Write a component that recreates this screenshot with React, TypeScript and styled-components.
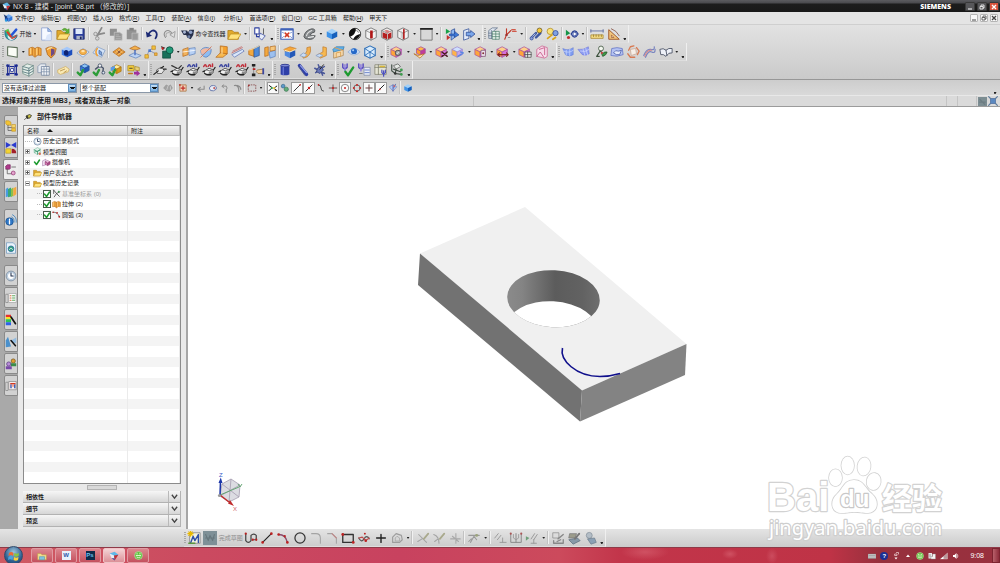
import React from "react";
import styled, { createGlobalStyle, css } from "styled-components";

const Global = createGlobalStyle`
  * { box-sizing: border-box; }
  html, body { margin: 0; padding: 0; }
  body {
    font-family: "Liberation Sans", "Noto Sans CJK SC", sans-serif;
    font-size: 6px;
    line-height: 10px;
    color: #1c1c1c;
    background: #d4d4d4;
  }
  button, select { font: inherit; color: inherit; }
`;

/* ---------- drawing helpers ---------- */

const line = (d: string, stroke: string, width = 1.2) => (
  <path d={d} fill="none" stroke={stroke} strokeWidth={width} strokeLinecap="round" strokeLinejoin="round" />
);
const area = (d: string, fill: string, stroke = "none", width = 0.8) => (
  <path d={d} fill={fill} stroke={stroke} strokeWidth={width} strokeLinejoin="round" />
);
const dot = (x: number, y: number, r: number, fill: string, stroke = "none") => (
  <circle cx={x} cy={y} r={r} fill={fill} stroke={stroke} strokeWidth={0.9} />
);
const cube = (top: string, left: string, right: string, edge = "none", x = 8, y = 8, s = 6) => (
  <>
    {area(`M${x} ${y - s}L${x + s} ${y - s / 2}L${x} ${y}L${x - s} ${y - s / 2}Z`, top, edge)}
    {area(`M${x - s} ${y - s / 2}L${x} ${y}V${y + s}L${x - s} ${y + s / 2}Z`, left, edge)}
    {area(`M${x + s} ${y - s / 2}L${x} ${y}V${y + s}L${x + s} ${y + s / 2}Z`, right, edge)}
  </>
);
const folder = (
  <>
    {area("M1 4H6L8 6H13V14H1Z", "#e0a92c", "#a87410")}
    {area("M4 8H16L12 14H1Z", "#ffe27c", "#b98a1c")}
  </>
);
const pinkCube = cube("#ffd08a", "#ffa63a", "#d66fdc", "#a8509c", 7, 8, 6);
const wireBox = (
  <>
    {area("M8 1L14 4V12L8 15L2 12V4Z", "#f2f2f2", "#555")}
    {line("M2 4L8 7L14 4M8 7V15", "#777", 0.8)}
  </>
);
const teapot = (
  <>
    {area("M3 9L8 6L13 8Q14 11 10 14L6 14Q2 13 3 9Z", "#f2f2f2", "#444", 0.9)}
    {area("M8 10L13 9Q13 12 10 14H7Z", "#8c8c8c")}
    {line("M13 8L15 5M3 9L1 10M3 12Q6 14 10 13", "#222", 1.3)}
    {line("M5 8Q8 10 12 8", "#555", 0.9)}
  </>
);
const flags = (
  <>
    {line("M2 1V5Q4 8 7 5V1", "#5a4fc0", 1.7)}
    {line("M4.5 2V9", "#8c7be0", 1.6)}
  </>
);
const greenCheck = line("M2 11L5 14L8 8", "#2c9c38", 2.8);
const pencil = (color: string) => line("M14 3L9 9", color, 2);

const drawings: Record<string, React.ReactNode> = {
  nx: (
    <>
      {area("M1 4L9 1L15 6L9 12Z", "#5db7e8")}
      {area("M1 4L8 7L9 12L4 11Z", "#e9eef4")}
      {area("M8 7L15 6L9 15Z", "#c02f35")}
      {area("M4 11L9 12V15Z", "#2e4aa8")}
    </>
  ),
  part: (
    <>
      {cube("#6fa8ee", "#1f55b8", "#2f78dc", "none", 9, 8, 6)}
      {area("M1 2L7 6L4 9Z", "#15356f")}
      {dot(5, 12, 2, "#2d9be0")}
    </>
  ),
  start: (
    <>
      {area("M1 4Q0 15 9 15Q15 14 15 9L10 11L5 7Z", "#2fa3a0", "#1c5f80")}
      {area("M1 4L5 2L8 9L7 12Z", "#5cc24a")}
      {area("M4 9L9 13L14 10Q12 15 8 15Q4 14 4 9Z", "#dcebf2")}
      {line("M8 10L14 3", "#2456d8", 2.8)}
      {line("M4 6L8 11", "#e0382c", 2.2)}
      {line("M9 13Q13 12 14 10", "#e0382c", 1.3)}
    </>
  ),
  page: (
    <>
      {area("M3 1H10L14 5V15H3Z", "#f6f9ff", "#7f97cc")}
      {area("M10 1L14 5H10Z", "#a9c2ee", "#6f8cc4")}
      {area("M9 9L14 7V15H7Z", "#dbe6fa")}
    </>
  ),
  open: (
    <>
      {folder}
      {area("M7 3Q10 0 13 3L15 2V7H10L12 5Q10 3 8 4Z", "#63b53a", "#3c8420", 0.5)}
    </>
  ),
  folder,
  save: (
    <>
      {area("M2 2H14V14H3L2 13Z", "#2c3f9e", "#17225e")}
      {area("M4 2H12V8H4Z", "#dfe9fa")}
      {area("M5 10H12V14H5Z", "#aeb6c8")}
      {area("M9 11H11V14H9Z", "#1b2560")}
    </>
  ),
  cut: (
    <>
      {line("M6 10L11 1", "#8a8a8a", 2)}
      {line("M5 9L14 7", "#8a8a8a", 2)}
      {dot(4, 8, 2, "#d8d8d8", "#8a8a8a")}
      {dot(6, 13, 2, "#d8d8d8", "#8a8a8a")}
    </>
  ),
  copy: (
    <>
      {area("M1 2H9V10H1Z", "#8f8f8f")}
      {area("M6 6H12L15 8V15H6Z", "#969696", "#c4c4c4")}
      {line("M8 9H11M8 11H13M8 13H13", "#bcbcbc", 0.8)}
    </>
  ),
  paste: (
    <>
      {area("M2 3H13V14H2Z", "#929292")}
      {area("M5 1H10V4H5Z", "#828282")}
      {area("M8 7H15V15H8Z", "#9b9b9b", "#c0c0c0")}
    </>
  ),
  undo: (
    <>
      {line("M4 8Q8 2 12 5Q15 8 12 13", "#1c2a74", 2)}
      {area("M1 5L2 12L8 10Z", "#1c2a74")}
    </>
  ),
  redo: (
    <>
      {line("M12 8Q8 2 4 5Q1 8 4 12", "#8e8e8e", 1.2)}
      {line("M11 8Q8 5 5 7Q4 9 5 11", "#9a9a9a", 0.9)}
      {area("M15 5L14 12L9 9Z", "#dedede", "#8e8e8e")}
    </>
  ),
  finder: (
    <>
      {area("M0 4H7L8 6L10 3H15L14 9L11 14L7 12L6 9L3 9Z", "#27304c")}
      {dot(4, 6, 1.6, "#a8b6d2")}
      {dot(11, 6, 2, "#8fa1c8")}
      {dot(9, 11, 1.7, "#6f81a8")}
    </>
  ),
  styles: (
    <>
      {area("M2 1H7V8H2Z", "#fff", "#2c3f9e", 1.2)}
      {line("M4 8V11H8", "#2c3f9e", 1.2)}
      {area("M8 7L14 10L10 15L7 12Z", "#e6ecf8", "#2c3f9e")}
      {line("M12 2V8", "#555", 1)}
    </>
  ),
  fit: (
    <>
      {area("M1 2H15V14H1Z", "#fff", "#3f62b8", 1.4)}
      {area("M1 2H15V4H1Z", "#3f62b8")}
      {line("M6 7L10 11M10 7L6 11", "#d33a22", 1.8)}
      {line("M3 6L4 7M13 6L12 7M3 12L4 11M13 12L12 11", "#3f62b8", 1)}
    </>
  ),
  shade: (
    <>
      {area("M1 11Q2 4 10 2Q15 2 13 6Q10 6 8 9Q11 10 14 10Q12 15 6 14Q2 14 1 11Z", "#85898b", "#3d4042")}
      {line("M4 10Q5 6 10 4", "#dedede", 1.2)}
      {line("M6 12L12 11", "#f2f2f2", 1.2)}
    </>
  ),
  blueCube: cube("#9fd0fa", "#3f93e8", "#1560bd"),
  bw: (
    <>
      {dot(8, 8, 6.5, "#fff", "#111")}
      {area("M8 1.5A6.5 6.5 0 0 0 2 11Q7 10 8 6Q10 3 8 1.5Z", "#111")}
      {area("M6 14Q8 9 14 8A6.5 6.5 0 0 1 6 14Z", "#111")}
      {line("M10 4L12 6", "#888", 1.2)}
    </>
  ),
  boxA: <>{wireBox}{area("M7 4H10V13H7Z", "#b01616")}</>,
  boxB: <>{wireBox}{area("M3 6L8 8V14L3 12ZM9 8L13 6V12L9 14Z", "#b52020")}{area("M5 4L8 3L12 5L8 7Z", "#d98080")}</>,
  boxC: <>{wireBox}{line("M9 3V13", "#b01616", 1.8)}{line("M6 5V12", "#bdbdbd", 1)}</>,
  square: (
    <>
      {area("M2 2H15V15H2Z", "#d8d8d8", "#555")}
      {line("M2 2H15", "#222", 2)}
    </>
  ),
  clipA: (
    <>
      {area("M1 2L6 5L1 8Z", "#18a04a")}
      {area("M2 9L6 12L2 15Z", "#c22f2f")}
      {area("M7 4L11 2V12L7 15Z", "#8fb9f2", "#22428e")}
      {area("M5 8H11V5L16 9L11 12V10H5Z", "#3c78d8", "#173a8c", 0.6)}
    </>
  ),
  clipB: (
    <>
      {area("M3 4L9 2V13L3 15Z", "#e2ebfa", "#22428e")}
      {area("M6 6H11V4L16 8L11 12V10H6Z", "#7aa6ea", "#22428e")}
    </>
  ),
  layers: (
    <>
      {area("M2 4L6 1H12L8 4V13H2Z", "#dfe6ef", "#5a6c86")}
      {line("M2 7H8M2 10H8M5 4V13", "#5a6c86", 0.8)}
      {area("M6 5H14V14H6Z", "#e5f2ea", "#4a7d6c")}
      {line("M6 8H14M6 11H14M10 5V14", "#4a7d6c", 0.8)}
    </>
  ),
  csys: (
    <>
      {line("M4 2V9L2 14M4 9L9 4", "#c0392b", 1.3)}
      {line("M10 3H14M11 5H15", "#d05a4a", 1.4)}
      {dot(4, 9, 1.4, "#9b2f2f")}
      {line("M6 12H8", "#888", 1)}
    </>
  ),
  lightA: (
    <>
      {line("M3 12L8 7M8 12L13 7", "#3c569f", 2.8)}
      {line("M4 11L7 8", "#c6d4f4", 1)}
      {dot(12, 4, 2.8, "#f6c93a", "#6a5a2d")}
      {dot(3, 13, 1.8, "#8ea2dc", "#344d98")}
    </>
  ),
  lightB: (
    <>
      {dot(6, 5, 3.6, "#f9e27a", "#b08f2d")}
      {dot(12, 7, 3, "#7fa0e2", "#344d98")}
      {line("M3 13L8 9M9 14L12 12", "#d8a41a", 2)}
    </>
  ),
  play: (
    <>
      {area("M1 3L6 7L1 10Z", "#159447")}
      {dot(4, 12, 1.8, "#c02f2f")}
      {area("M7 8Q11 1 15 8Q11 15 7 8Z", "#c7d9f6", "#2a3f92", 1.4)}
      {dot(11, 8, 2, "#fff", "#2a3f92")}
    </>
  ),
  ruler: (
    <>
      {area("M1 9H15V13H1Z", "#f3db86", "#a58226")}
      {line("M1 3V6M15 3V6M1 4.5H15", "#5b6b9f", 1)}
      {line("M4 9V11M7 9V11M10 9V11M13 9V11", "#8b6d1d", 0.7)}
    </>
  ),
  angle: (
    <>
      {area("M2 3L14 14H2Z", "#f3c77d", "#a0572a", 1.1)}
      {area("M5 9L8 12H5Z", "#e4e4e4", "#a0572a")}
      {line("M5 2Q11 4 14 10", "#8a5c4f", 1)}
    </>
  ),
  plane: area("M3 2L14 3V14L3 12Z", "#fafcf6", "#5c6e58", 1.2),
  extrude: (
    <>
      {area("M1 4Q5 1 8 4Q11 1 15 4V12Q11 10 8 14Q5 10 1 12Z", "#f3a93e", "#b3671a")}
      {line("M8 4V13M5 4V11M12 4V11", "#c4782a", 1)}
      {line("M3 4V10M10 4V11", "#ffdc98", 1)}
    </>
  ),
  revolve: (
    <>
      {area("M2 4Q8 0 14 4L12 11L8 15L4 11Z", "#f0a034", "#a85d18")}
      {area("M8 4L12 5V10L8 13Z", "#6c4a86")}
      {line("M4 5Q6 3 9 3", "#fbe0a2", 1.4)}
    </>
  ),
  hole: <>{cube("#a5c8fa", "#3c7be8", "#1d4fbf")}<ellipse cx="7" cy="9" rx="2.6" ry="3.2" fill="#0f2474" /></>,
  boss: (
    <>
      {area("M1 9L8 4L15 8L8 14Z", "#dbe8f9", "#7f9ac2")}
      <ellipse cx="8" cy="8" rx="4" ry="3" fill="#f6b34a" stroke="#d0903c" />
      <ellipse cx="8" cy="7" rx="2" ry="1.2" fill="#ffe2ac" />
    </>
  ),
  pocket: (
    <>
      {area("M1 9L6 2L15 6L11 14Z", "#d3e3f8", "#7f9ac2")}
      {line("M6 4Q3 8 6 12", "#f0a034", 1.8)}
      {area("M8 6L11 8V12L8 10Z", "#7ea2d8", "#46669c")}
    </>
  ),
  emboss: (
    <>
      {area("M1 8L8 3L15 8L8 13Z", "#f1a33c", "#b0661b")}
      {line("M4 8L8 11M6 6L11 10M9 5L13 8", "#a86a2a", 0.9)}
      {line("M4 9L9 5M7 11L12 7", "#ffd68c", 0.9)}
      {dot(8, 8, 1.5, "#8f5a3c")}
    </>
  ),
  offset: (
    <>
      {area("M1 12L7 9L15 12L9 15Z", "#bcd3f3", "#5b7fb8")}
      {area("M2 4L8 1L14 4L8 6Z", "#f4b04a", "#b0661b")}
      {line("M8 6V11", "#4a6fc0", 1.6)}
    </>
  ),
  pattern: (
    <>
      {line("M3 13L6 6L12 3M6 6L13 10", "#8a94b0", 1.1)}
      {area("M1 11H5V15H1Z", "#f1c33c", "#c0882a")}
      {area("M9 1H13V5H9Z", "#f1c33c", "#c0882a")}
      {area("M5 5H8V8H5Z", "#4a78d0")}
      {area("M12 9H15V12H12Z", "#f1b03c", "#c0882a")}
    </>
  ),
  unite: (
    <>
      {area("M3 7H12V15H3Z", "#17705a", "#0b4638")}
      {dot(11, 6, 4, "#1f9a78", "#0b4638")}
      {area("M1 1L6 3L3 6Z", "#333")}
      {dot(3, 4, 1.3, "#c22")}
    </>
  ),
  trim: (
    <>
      {area("M1 5L7 3V11L1 13Z", "#f3b45e", "#b3671a")}
      {area("M8 4L15 3V10L8 12Z", "#b7d0f5", "#5b7fb8")}
      {line("M1 8L15 6", "#fff", 0.9)}
    </>
  ),
  split: (
    <>
      {area("M2 6Q7 0 14 5Q14 12 8 14Q2 13 2 6Z", "#8fbcf1", "#4a78bd")}
      {area("M2 6Q7 2 14 5Q8 7 3 11Z", "#f2b8a0")}
      {line("M2 14L14 2", "#d0785a", 1)}
    </>
  ),
  rib: (
    <>
      {area("M6 1L14 2V10L6 12Z", "#f4a12e", "#b3671a")}
      {area("M6 9L14 10L9 14L1 14Z", "#f7b84e", "#b3671a")}
      {line("M8 3V10", "#fbe0a2", 1.2)}
    </>
  ),
  sheet: (
    <>
      {area("M1 11L13 5L15 7L4 14Z", "#d9e7fa", "#5b6fb0")}
      {line("M2 7L12 2M1 9L13 3", "#c46a6a", 0.9)}
    </>
  ),
  draft: (
    <>
      {area("M2 6L8 4V13L2 11Z", "#f3a93e", "#b3671a")}
      {area("M8 4L14 1V12L8 14Z", "#4f8ad8", "#2c5294")}
      {line("M2 6L8 4L14 1", "#ffe4b0", 1)}
    </>
  ),
  shell: (
    <>
      {area("M2 3L6 2V12L2 13Z", "#f3a93e", "#b3671a")}
      {area("M7 8L14 6V13L8 15Z", "#9cc0f0", "#5b7fb8")}
      {area("M8 2L14 1V6L8 7Z", "#f6c77d", "#b3671a")}
    </>
  ),
  thread: (
    <>
      {area("M1 5L8 2L15 4L13 6L3 8Z", "#f6a63a", "#b3671a", 0.6)}
      {area("M2 7L8 8V15L2 12Z", "#4f8ae0")}
      {area("M8 8L14 6V12L8 15Z", "#2358b8")}
      {line("M2 6L8 8L14 5", "#fff1c8", 1)}
    </>
  ),
  blend: (
    <>
      {area("M3 11Q10 11 9 3L13 2Q15 13 5 15Z", "#f3b04e", "#c07a2a")}
      {area("M1 12L5 9L9 11L6 14Z", "#c7dcf7", "#7f9ac2")}
    </>
  ),
  chamfer: (
    <>
      {area("M3 11L9 8V2L13 3V12L6 15Z", "#f7b84f", "#c07a2a")}
      {area("M1 12L5 14L9 12L5 10Z", "#c7dcf7", "#7f9ac2")}
    </>
  ),
  scale: (
    <>
      {area("M3 7L14 4V12L3 15Z", "#f7d9ac", "#a37f4e")}
      {area("M2 5L6 2H15L14 5L3 8Z", "#5fb0ea", "#3b7fb2")}
      {line("M4 3L13 6", "#e8a050", 1.2)}
      {line("M6 14V9L11 8V13", "#d8a050", 1)}
    </>
  ),
  sphere: (
    <>
      {area("M1 8Q8 0 15 8Q8 15 1 8Z", "#c8dcf5", "#8fa9d0")}
      {dot(8, 7, 3.4, "#2468c8")}
      {dot(7, 6, 1.2, "#a8ccf6")}
    </>
  ),
  net: (
    <>
      {area("M8 1L14 4V12L8 15L2 12V4Z", "#d8ebfb", "#2e6fb8", 1.2)}
      {line("M2 4L8 8L14 4M8 8V15M2 12L8 8L14 12", "#2e6fb8", 1)}
    </>
  ),
  syncMove: <>{pinkCube}{dot(9, 9, 3, "#a8a8a8", "#444")}{line("M8 10L10 8", "#f2f2f2", 1)}</>,
  syncPull: <>{cube("#ffb84a", "#ff9d2e", "#c23a9a", "#a0459c", 9, 7, 5)}{area("M1 10L6 12L13 10L8 15Z", "#ffe4b0", "#b3671a")}</>,
  syncDelete: <>{pinkCube}{line("M8 8L14 13M14 8L8 13", "#4a2020", 1.6)}</>,
  syncReplace: <>{cube("#cfe0ff", "#ffb347", "#c6a4e8", "#9a87d0", 7, 8, 6)}{line("M8 13L14 9L11 8", "#5a86e2", 1.6)}</>,
  syncResize: <>{pinkCube}{area("M8 6H13V13H8Z", "#efe4ef", "#75506a")}{dot(10.5, 9.5, 1.1, "#803030")}</>,
  syncDim: <>{pinkCube}{line("M2 11H14M4 9L2 11L4 13M12 9L14 11L12 13", "#802222", 1.2)}</>,
  syncEdit: <>{pinkCube}{area("M8 8H15V14H8Z", "#eee", "#444")}{line("M8 11H15M11 8V14", "#444", 0.9)}</>,
  syncShell: (
    <>
      {area("M2 5L8 1L14 3V13L11 15L2 13Z", "#f6dcea", "#c85a8a")}
      {line("M5 5L11 3V11M2 13L6 8L10 14", "#c85a8a", 1)}
    </>
  ),
  surfA: (
    <>
      {area("M2 4Q8 7 14 3V11Q10 14 5 11Z", "#7f9cf0", "#5870d0", 0.5)}
      {line("M6 6V11M10 5V12M3 7Q9 10 14 6", "#c4d2fc", 0.9)}
    </>
  ),
  surfB: (
    <>
      {area("M1 5Q7 6 13 2L14 10Q10 13 6 11Z", "#8c9cf2", "#6068d4", 0.5)}
      {line("M4 7Q9 9 14 5M7 5L9 12M10 4L12 11", "#ccd4fd", 0.9)}
    </>
  ),
  sweep: (
    <>
      {dot(8, 4, 2.8, "#f2f6ee", "#3a4f3a")}
      {line("M7 7L3 13M3 13L6 13M8 7L9 10", "#3a4f3a", 1.2)}
      {area("M9 11Q11 7 15 8Q14 12 10 13Z", "#3f9a48", "#274f2a")}
      {dot(9, 9, 1.3, "#c04040")}
    </>
  ),
  mesh: (
    <>
      {area("M2 4Q8 2 14 4L15 11Q8 14 1 12Z", "#b4c2f2", "#5a6cc2")}
      {area("M4 9Q6 5 10 7L13 6L11 11Q7 12 4 9Z", "#e6ebfb", "#3a4fa2")}
    </>
  ),
  nSided: (
    <>
      {area("M5 5L11 4L12 10L6 12Z", "#f6efe8", "#c8a08a")}
      {line("M3 6L5 2L9 1M12 3L15 7L13 11M10 14L5 14L2 10", "#d87a52", 1.5)}
    </>
  ),
  ribbon: (
    <>
      {line("M2 12Q5 4 10 5T14 2", "#7a86c0", 1.4)}
      {line("M4 14Q7 6 11 8T15 5", "#7a86c0", 1.4)}
      {line("M3 13Q6 5 11 6", "#d98a8a", 1.2)}
    </>
  ),
  book: (
    <>
      {area("M1 5Q5 3 8 6Q11 3 15 4V9Q11 8 8 13Q5 10 2 11Z", "#eef1f8", "#4a5266", 1)}
      {line("M8 6L9 12", "#4a5266", 1)}
    </>
  ),
  frame: (
    <>
      {line("M3 4H13V12H3Z", "#1c2a8e", 1.3)}
      {line("M5 2V14M11 2V14M5 10L11 5", "#4a58b8", 1)}
      {dot(8, 8, 2, "#f2f4ff", "#1c2a8e")}
      {dot(3, 3, 1.7, "#1c2a8e")}{dot(13, 3, 1.7, "#1c2a8e")}{dot(3, 13, 1.7, "#1c2a8e")}{dot(13, 13, 1.7, "#1c2a8e")}
    </>
  ),
  stackA: (
    <>
      {area("M2 4L7 1L14 3V12L9 15L2 12Z", "#e4eee8", "#6a8a80")}
      {line("M2 4L9 6L14 3M2 7L9 9L14 6M2 10L9 12L14 9M9 6V15", "#5a7a80", 1)}
    </>
  ),
  stackB: (
    <>
      {area("M1 4L4 1H10V11H1Z", "#e6eaf0", "#7a8ca6")}
      {area("M5 4H14V14H5Z", "#f2f4f7", "#6a7c98")}
      {line("M5 7H14M5 10H14M8 4V14M11 4V14", "#7a8ca6", 0.8)}
    </>
  ),
  tag: (
    <>
      {area("M2 8L11 4L15 7L14 10L5 13L2 11Z", "#f9e9b4", "#d0ac5a")}
      {line("M5 9L10 7M9 11L12 9", "#b8924a", 1)}
    </>
  ),
  asmAdd: <>{cube("#8cc4f6", "#3a7ad8", "#2259b4", "#1f4f9c", 10, 6, 5)}{greenCheck}</>,
  asmMove: (
    <>
      {line("M4 7L9 3L13 6L12 12", "#4a5468", 1.6)}
      {dot(9, 3, 2, "#f2f2f2", "#37455f")}
      {dot(13, 11, 1.6, "#dfe5f0", "#37455f")}
      {greenCheck}
    </>
  ),
  asmMate: <>{cube("#ffec9c", "#f6c52f", "#d99a18", "#a87410", 10, 7, 5)}{area("M3 5L8 3V8L3 9Z", "#5a9ae6")}{greenCheck}</>,
  asmSeq: (
    <>
      {area("M1 3H8V9H1Z", "#f6cf3d", "#a8861c")}
      {area("M9 4L14 5V9L9 8Z", "#e8d07a", "#a8861c")}
      {line("M2 12H6", "#c27a1c", 1.8)}
      {area("M8 10H11V8L15 12L11 15V13H8Z", "#a0309c")}
      {line("M3 6H6", "#333", 1)}
    </>
  ),
  teapotA: (
    <>
      {area("M4 8L9 5L13 8L10 12L5 12Z", "#e6e6e6", "#444")}
      {line("M1 13L6 9M12 7L15 7M9 6L12 4", "#222", 1.4)}
    </>
  ),
  teapotB: <>{teapot}{line("M2 3L8 6M13 3L10 6", "#333", 1.3)}</>,
  teapotC: <>{teapot}{line("M2 4Q4 0 5 4M7 4Q9 0 10 4M12 1V4", "#3b46a0", 1.7)}</>,
  teapotD: <>{teapot}{line("M2 4Q4 0 5 4M7 4Q9 0 10 4M12 1V4", "#c02f3a", 1.7)}</>,
  treeHand: (
    <>
      {line("M3 2V14", "#888", 1)}
      {area("M1 1H5V4H1ZM1 12H5V15H1Z", "#222")}
      {area("M2 6H5V8H2Z", "#b22")}
      {area("M7 8L14 7V12H8L6 10Z", "#f3cf9a", "#8a6a3a")}
      {area("M13 6H15V13H13Z", "#3b46a0")}
    </>
  ),
  cylinder: (
    <>
      {area("M3 3V13Q8 15 13 13V3Z", "#2e3fa8")}
      <ellipse cx="8" cy="3" rx="5" ry="1.5" fill="#7c88d8" stroke="#2a368c" />
      {line("M6 5V13", "#6c7ad8", 1.4)}
    </>
  ),
  pin: <>{line("M4 3L12 13", "#2e3fa8", 4)}{line("M5 3L12 11", "#9aa6ea", 1.2)}{line("M3 4L10 14", "#555f90", 1)}</>,
  screw: <>{line("M2 6L13 12M3 11L13 4M6 2L11 14", "#4b589a", 1.7)}{area("M5 6L9 4L12 8L8 12L4 10Z", "#6a78b8", "#29366e")}{line("M12 2L8 7", "#222", 1.1)}</>,
  checkA: <>{flags}{line("M5 10L8 14L14 5", "#1d9a30", 2.6)}</>,
  checkB: <>{flags}{area("M8 5H15V14H8Z", "#e8ecf6", "#7a86a6")}{line("M9 8H14M9 11H14", "#5f7ac8", 1)}{line("M3 12H6", "#777", 1)}</>,
  checkC: <>{area("M1 2H14V13H1Z", "#e4e4d4", "#7c7c6a")}{line("M1 5H14M5 2V13", "#7c7c6a", 0.9)}{line("M7 4H12", "#d8b83a", 1.6)}{line("M9 8V11L11 13L13 11V8M11 9V15", "#4b4fc0", 1.4)}</>,
  checkD: (
    <>
      {area("M4 3L9 1L12 4L7 7Z", "#e4e8e4", "#555")}
      {line("M2 2V9L6 12L13 13M4 7L12 10M7 7L6 12", "#3f4c43", 1.3)}
      {dot(13, 8, 1.6, "#3c9b4c")}{dot(13, 13, 1.5, "#3c9b4c")}{dot(6, 12, 1.5, "#333")}
    </>
  ),
  selGray: <>{area("M1 8L5 3L9 5L12 3L15 8L11 13L5 12Z", "#a2a2a2", "#8a8a8a")}{line("M8 5L6 11M12 6V10", "#cacaca", 1.4)}</>,
  selPlus: <>{area("M3 3H13V13H3Z", "#f4d4be", "#b07a4a", 1.4)}{line("M8 5V11M5 8H11", "#c0302a", 2)}{dot(3, 3, 1.5, "#c0302a")}</>,
  selBack: line("M13 5V10H4M7 7L3 10L7 13", "#8b8b8b", 1.7),
  selLasso: <>{area("M2 8Q4 3 9 4Q15 5 13 10Q9 14 4 12Z", "#e8ecf6", "#6f7faf", 1.6)}{dot(10, 8, 1.8, "#c06060")}</>,
  selRot: line("M4 5H10Q13 8 10 11M6 3L3 5L6 8M10 11V15", "#8b8b8b", 1.5),
  selHook: line("M4 4Q11 3 11 13M9 4Q14 6 14 10", "#8b8b8b", 2),
  marquee: <><rect x="2" y="3" width="12" height="10" fill="none" stroke="#8a5050" strokeWidth="1.4" strokeDasharray="2.5 1.5" />{dot(3, 4, 1.3, "#a02222")}</>,
  snapMix: <>{line("M2 4L6 7M2 12L5 9M10 8L14 5M10 9L14 12", "#222", 1.6)}{dot(6, 8, 1.8, "#2f9b48")}{dot(10, 8, 1.8, "#e0b92c")}{dot(13, 12, 1.3, "#222")}</>,
  snapMesh: <>{dot(5, 5, 3, "#5d9ac8", "#2f5f82")}{dot(10, 10, 3.4, "#62ad7a", "#2f6a44")}</>,
  snapEnd: <>{line("M3 13L13 3", "#222", 1.4)}{dot(13, 3, 1.3, "#c22")}</>,
  snapMid: <>{line("M3 13L13 3", "#222", 1.4)}{dot(8, 8, 1.9, "#c22")}</>,
  snapCtrl: <>{line("M4 3Q8 3 8 8Q8 13 12 13", "#444", 1.5)}{dot(4, 3, 1.3, "#c22")}</>,
  snapCross: <>{line("M2 8H14M8 3V14", "#5b4444", 1.4)}{dot(8, 8, 1.7, "#c22")}</>,
  snapArc: <>{dot(8, 8, 6, "none", "#333")}{dot(8, 8, 1.6, "#c22")}</>,
  snapQuad: <><circle cx="8" cy="8" r="5" fill="none" stroke="#555" strokeWidth="1.4" />{dot(8, 3, 1.6, "#c22")}{dot(8, 13, 1.6, "#c22")}{dot(3, 8, 1.6, "#c22")}{dot(13, 8, 1.6, "#c22")}</>,
  snapPoint: line("M8 3V13M3 8H13", "#6a4040", 1.6),
  snapCurve: <>{line("M3 13L13 3", "#222", 1.6)}{dot(6, 10, 1.4, "#c22")}</>,
  snapFace: <>{area("M2 6L8 3L14 6L8 13Z", "#b9cff4", "#4b67b8")}{line("M8 3V13M12 2L9 8", "#4f5fae", 1.4)}{dot(10, 5, 1.4, "#d06060")}</>,
  sketch: (
    <>
      {area("M3 2H15V14H3Z", "#f2f2e0", "#777")}
      {line("M4 14L7 6L9 11L13 4V13", "#2f4fa8", 1.6)}
      {line("M2 1L6 5M4 0V6M1 3H7M6 1L2 5", "#e8b800", 1.3)}
      {line("M2 14H9", "#5b9740", 1.6)}
    </>
  ),
  finish: <>{area("M0 0H16V16H0Z", "#7e9097")}{line("M3 4L6 11L8 5L11 11L13 4M3 8H13", "#66767c", 1.2)}</>,
  profile: <>{line("M2 3V11Q5 15 8 11V5Q11 2 14 5V10H10", "#444", 1.4)}{dot(2, 3, 1.3, "#b22")}{dot(10, 10, 1.3, "#b22")}{dot(14, 10, 1.3, "#b22")}</>,
  segment: <>{line("M3 13L13 3", "#222", 1.4)}{dot(3, 13, 1.5, "#b22")}{dot(13, 3, 1.5, "#b22")}</>,
  arc: <>{line("M3 4Q11 4 13 13", "#8a4a6a", 1.5)}{dot(3, 4, 1.5, "#b22")}{dot(13, 13, 1.5, "#b22")}{dot(10, 6, 1.3, "#b22")}</>,
  circle: <circle cx="8" cy="8" r="5.8" fill="none" stroke="#333" strokeWidth="1.4" />,
  fillet: line("M3 3H8Q13 3 13 8V14", "#a4a4a4", 1.2),
  bevel: <>{line("M3 3H8L13 8V14", "#a4a4a4", 1.2)}{line("M8 3L13 8", "#c08a8a", 1.3)}</>,
  rect: <>{line("M2 4H14V13H2Z", "#333", 1.5)}{dot(2, 4, 1.6, "#b22")}{dot(14, 13, 1.6, "#b22")}</>,
  spline: <>{line("M2 8Q5 14 8 9T14 9", "#555", 1.3)}{line("M2 8L6 7L10 11L14 8", "#c04a4a", 1.3)}{dot(9, 3, 1.1, "#b22")}{dot(10, 11, 1.5, "#b22")}</>,
  plus: line("M8 4V13M3 8H13", "#222", 1.6),
  polygon: <>{area("M3 13V7L7 3L13 5L14 10L11 13Z", "none", "#9d9d9d", 1.3)}{line("M6 11V8L8 6L11 8V11Z", "#a9a9a9", 1)}</>,
  trimA: <>{line("M3 4L12 13M2 12L7 9", "#a4a4a4", 1.2)}{pencil("#a9a98c")}</>,
  trimB: <>{line("M2 4Q8 6 8 14M3 12L7 9", "#a4a4a4", 1.2)}{pencil("#a9a98c")}</>,
  extend: line("M3 9H14M9 3V14M5 6L12 12", "#a8a8a8", 1.2),
  project: <>{line("M2 5H14M4 13L8 6L11 10M2 12L5 9", "#999", 1.2)}{dot(11, 5, 1.7, "#9ba37c")}</>,
  parallel: line("M2 8L6 3M5 10L9 5M8 13H15M11 13V8", "#9a9a9a", 1.1),
  symmetry: <>{line("M2 3V13H14V3M8 3V13", "#888", 1.1)}{line("M5 4V8L8 10L11 8V4", "#999", 1)}{dot(2, 3, 1.2, "#a55")}{dot(14, 3, 1.2, "#a55")}</>,
  constraint: <>{area("M1 6L5 8L1 11Z", "#6da07a")}{line("M7 9L11 3M10 10L14 4M7 14H13M10 14V10", "#999", 1.1)}</>,
  convert: <>{area("M2 2H9V8H2Z", "#dcdcdc", "#888")}{line("M8 9L14 4M4 14H14V10M3 11V14M7 12L11 10", "#888", 1.5)}</>,
  mirror: <>{area("M3 3H11L9 8H2Z", "#9c9c8c", "#777")}{area("M2 10L12 8L15 11L7 15Z", "#8899a8", "#5d6d7b")}{pencil("#777")}</>,
  bucket: <>{dot(6, 5, 3.4, "#b3bdc6", "#8a949e")}{area("M4 9L12 8L14 13L8 15Z", "#8ba0b4", "#6d7d8b")}</>,
  clock: <>{dot(8, 8, 6.5, "#cfdfee", "#5e7288")}{dot(8, 8, 4.8, "#fff", "#9db4cc")}{line("M8 4V8H11", "#1c2d4a", 1.4)}</>,
  modelView: <>{area("M2 5L8 1L13 4V10L7 13L2 10Z", "#e4f4ec", "#5fae8c")}{line("M2 5L8 8L13 4M8 8V13M3 9L12 6", "#2f9265", 1.3)}{dot(12, 12, 2.2, "#d0705a")}</>,
  camera: <>{area("M1 5L7 2V12L1 14Z", "#f1e2f2", "#8d5a94")}{cube("#f4c3e4", "#d977b0", "#b04a8a", "#803468", 10, 9, 4.5)}</>,
  arcTree: <>{line("M2 4Q10 3 13 12", "#555", 1.3)}{dot(2, 4, 1.4, "#b22")}{dot(9, 5, 1.6, "#b22")}{dot(13, 12, 1.6, "#b22")}</>,
  csysTree: <>{line("M3 2L8 8L4 14M8 8L14 5M8 8L13 13M3 2V8", "#4c4c4c", 1.5)}{dot(12, 5, 1.7, "#4a9a5a")}</>,
  pushpin: <>{line("M1 13L7 8", "#222", 1.2)}{area("M4 6L11 3L15 5L12 10L6 11Z", "#c8c044", "#222", 1.4)}{area("M4 6L7 5L9 10L6 11Z", "#333")}</>,
  navAsm: <>{area("M1 1H5L8 3V7H3L1 5Z", "#f3c332", "#c0922a")}{line("M4 7V14H9M4 10H9", "#555", 0.9)}{area("M9 6H14V10H9Z", "#f6d56a", "#c0922a")}{area("M9 11H14V15H9Z", "#f3c332", "#c0922a")}</>,
  navCon: <>{area("M1 0L8 4L1 8ZM15 0L8 4L15 8Z", "#2c3ccf")}{area("M1 9H8V15H1Z", "#f3d332", "#b3931c")}{area("M9 9Q15 9 15 15H9Z", "#a2202a")}</>,
  navPart: <>{area("M1 3L3 1H7V6L6 7H1Z", "#b03a8c", "#6d1f56")}{line("M3 7V13H9M9 4H14", "#555", 1)}{dot(11, 12, 2.6, "#e3a3cc", "#8e2f6d")}</>,
  navReuse: <>{area("M1 4L4 2V14L1 15Z", "#4a9be0")}{area("M4 4L8 2V14L4 15Z", "#38a878")}{area("M8 4L11 2V13L8 15Z", "#8cc04a")}{area("M11 3L15 1V11L11 14Z", "#f3a93e")}</>,
  navInfo: <>{dot(6, 10, 5, "#2f78c8", "#174a84")}{line("M6 9V13M6 7V7.2", "#fff", 1.8)}{line("M9 4Q13 6 12 11M10 1Q16 4 15 11", "#4a8ac2", 1.2)}</>,
  navWeb: <>{area("M2 1H11L14 4V15H2Z", "#e9f2fa", "#5b8cb8")}{dot(8, 9, 3.8, "#35a07f", "#1f5f98")}{line("M6 10Q8 6 10 10", "#dff2f2", 1.2)}</>,
  navHist: <>{area("M1 3H4V14H1Z", "#ddd", "#777")}{area("M5 2H15V14H5Z", "#fafafa", "#999")}{line("M7 5H8M7 8H8M7 11H8", "#d86a3a", 1.6)}{line("M10 5H13M10 8H13M10 11H13", "#5aaa5a", 1.3)}</>,
  navMat: <>{area("M1 1H8V4H1Z", "#e8312a")}{area("M1 4H8V7H1Z", "#f5e02c")}{area("M1 7H8V11H1Z", "#2fc455")}{area("M1 11H8V15H1Z", "#2e62e8")}{line("M8 4L14 13", "#111", 2.2)}</>,
  navScene: <>{area("M1 6L4 1L8 14L1 15Z", "#4a90cc")}{area("M8 6L15 2V9L10 10Z", "#93bce0")}{line("M8 6L14 13", "#111", 2)}</>,
  navRole: <>{dot(11, 4, 2.8, "#e0a030", "#6d4a10")}{area("M8 7H15V11H8Z", "#3a8c4a")}{dot(5, 8, 2.8, "#b98cd8", "#4c2f78")}{area("M1 11H9V15H1Z", "#7848a8")}</>,
  navSys: <>{area("M1 3H4V14H1Z", "#ddd", "#777")}{area("M5 2H15V13H5Z", "#f6ecec", "#777")}{area("M7 4H14V6H7Z", "#d33a22")}{area("M7 6H9V11H7ZM12 6H14V11H12Z", "#3f62b8")}{area("M9 6H12V9H9Z", "#f0a090")}</>,
  tile: <>{area("M0 0H16V16H0Z", "#7c8d92")}{line("M3 4L12 13M3 9H13", "#6c7c82", 2)}</>,
  full: <>{area("M4 4H12V12H4Z", "#5a88c0", "#2c4f86")}{line("M1 1L4 4M15 1L12 4M1 15L4 12M15 15L12 12", "#5c7a9c", 1.8)}</>,
  explorer: <>{area("M1 4H6L8 6H15V14H1Z", "#f2dd8e", "#b99b42")}{area("M4 9H12V14H4Z", "#7fc4e0", "#508ca8")}</>,
  ime: <>{area("M0 4H16V13H0Z", "#cfcfcf", "#777")}{line("M2 7H14M2 10H14", "#888", 1.1)}</>,
  tray: <>{line("M6 4H10V7H6ZM9 1H13V4", "#f0dada", 1.4)}{area("M5 11H11L8 15Z", "#fff")}</>,
  up: area("M4 10L8 5L12 10Z", "#fff"),
  safe: <>{dot(8, 8, 7, "#5fc23c", "#d8f0c8")}{line("M4 8H12M5 5H6M10 5H11M5 11Q8 13 11 11", "#e8f8dc", 1.6)}</>,
  flag: <>{area("M1 2H8V13H1Z", "#ece8e8")}{area("M9 4H15V14H6V9H9Z", "#f8f4f4", "#888")}{line("M4 5V10", "#777", 1.4)}</>,
  signal: <>{area("M1 14L15 2V14Z", "#b8999c", "#e8d0d0")}{area("M1 14L7 9V14Z", "#fff")}</>,
  volume: <>{area("M2 6H5L9 2V14L5 10H2Z", "#fff")}{line("M11 5Q13 8 11 11", "#fff", 1.3)}</>,
};

const Glyph = styled.svg<{ $size?: number }>`
  flex: none;
  display: block;
  width: ${(p) => p.$size ?? 14}px;
  height: ${(p) => p.$size ?? 14}px;
`;

const Icon = ({ name, size }: { name: string; size?: number }) => (
  <Glyph viewBox="0 0 16 16" $size={size} aria-hidden="true">
    {drawings[name]}
  </Glyph>
);

/* ---------- window frame ---------- */

const Window = styled.div`
  display: flex;
  flex-direction: column;
  height: 100vh;
  overflow: hidden;
`;

const TitleBar = styled.header`
  display: flex;
  align-items: center;
  height: 12px;
  flex: none;
  padding: 1px 1px 0 2px;
  gap: 2px;
  color: #e2e2e2;
  font-size: 7px;
  line-height: 10px;
  background: linear-gradient(#5c5c60 0, #49494d 3px, #1d1d1d 4px, #191919 100%);
`;

const Title = styled.h1`
  flex: 1;
  margin: 0;
  font: inherit;
`;

const Brand = styled.span`
  margin-right: 12px;
  color: #fff;
  font: 800 7px/10px "Open Sans", sans-serif;
`;

const WindowButton = styled.button<{ $tone?: "dark" | "close" | "light" }>`
  display: grid;
  place-items: center;
  width: ${(p) => (p.$tone === "light" ? 8 : 10)}px;
  height: ${(p) => (p.$tone === "light" ? 8 : 9)}px;
  padding: 0;
  border: 1px solid ${(p) => (p.$tone === "light" ? "#b5b5b5" : "#3a3a3a")};
  border-radius: 1px;
  color: ${(p) => (p.$tone === "light" ? "#444" : "#fff")};
  background: ${(p) => (p.$tone === "close" ? "#d9533c" : p.$tone === "light" ? "#f7f7f7" : "#57575a")};
`;

const WindowMark = ({ kind }: { kind: "min" | "restore" | "close" }) => (
  <svg width="6" height="6" viewBox="0 0 6 6" fill="none" stroke="currentColor" aria-hidden="true">
    {kind === "min" && <path d="M1 5H5" />}
    {kind === "restore" && <path d="M2 2V1H5V4H4M1 2.5H4V5H1Z" strokeWidth="0.8" />}
    {kind === "close" && <path d="M1 1L5 5M5 1L1 5" strokeWidth="1.3" />}
  </svg>
);

const MenuBar = styled.nav`
  display: flex;
  align-items: center;
  flex: none;
  height: 13px;
  padding: 0 2px 0 3px;
  background: #e4e4e4;
  border-bottom: 1px solid #cfcfcf;
`;

const Menus = styled.div`
  display: flex;
  flex: 1;
  gap: 6px;
  margin-left: 2px;
`;

const MenuItem = styled.button`
  min-width: 20px;
  padding: 0;
  border: 0;
  background: none;
  text-align: left;
  white-space: nowrap;
  line-height: 10px;
`;

const MenuButtons = styled.div`
  display: flex;
  gap: 2px;
`;

/* ---------- toolbars ---------- */

const ToolArea = styled.div`
  flex: none;
  border-bottom: 1px solid #979797;
  background: linear-gradient(#e2e2e2, #cacaca);
`;

const ToolRow = styled.div`
  display: flex;
  gap: 1px;
  height: 18px;
  padding-left: 2px;
`;

const ToolGroup = styled.div<{ $width: number }>`
  display: flex;
  align-items: center;
  justify-content: space-between;
  flex: 0 0 ${(p) => p.$width}px;
  border-right: 1px solid #efefef;
  border-bottom: 1px solid #dedede;
`;

const Grip = styled.span`
  width: 2px;
  height: 12px;
  background: repeating-linear-gradient(#a8a8a8 0 1px, transparent 1px 2px);
`;

const Divider = styled.span`
  width: 3px;
  height: 13px;
  border-left: 1px solid #c2c2c2;
  box-shadow: inset 1px 0 #f1f1f1;
`;

const ToolButton = styled.button<{ $small?: boolean; $pressed?: boolean; $muted?: boolean }>`
  display: flex;
  align-items: center;
  justify-content: center;
  gap: 1px;
  flex: none;
  height: 14px;
  min-width: ${(p) => (p.$small ? 12 : 16)}px;
  padding: 0;
  border: 0;
  background: none;
  white-space: nowrap;
  color: ${(p) => (p.$muted ? "#909090" : "#1c1c1c")};
  ${(p) =>
    p.$small &&
    css`
      height: 12px;
    `}
  ${(p) =>
    p.$pressed &&
    css`
      background: #fafafa;
      box-shadow: inset 0 0 0 1px #9a9a9a;
    `}
`;

const DropButton = styled.button<{ $low?: boolean }>`
  display: flex;
  align-items: ${(p) => (p.$low ? "flex-end" : "center")};
  justify-content: center;
  width: 6px;
  height: 13px;
  padding: 0;
  border: 0;
  background: none;
  &::after {
    content: "";
    width: 3px;
    height: 2px;
    background: #222;
    clip-path: polygon(0 0, 100% 0, 67% 100%, 33% 100%);
  }
`;

/* Item codes: "|" divider, "v" drop-down arrow, "." overflow arrow, "name:caption" captioned button */
const ToolItem = ({ code }: { code: string }) => {
  if (code === "|") return <Divider />;
  if (code === "v") return <DropButton aria-label="展开" />;
  if (code === ".") return <DropButton $low aria-label="更多" />;
  const [name, caption] = code.split(":");
  if (!name) return <ToolButton $muted>{caption}</ToolButton>;
  return (
    <ToolButton aria-label={caption ?? name}>
      <Icon name={name} />
      {caption}
    </ToolButton>
  );
};

type Bar = { width: number; items: string };

const Toolbar = ({ width, items }: Bar) => (
  <ToolGroup role="toolbar" $width={width}>
    <Grip />
    {items.split(" ").map((code, i) => (
      <ToolItem key={i} code={code} />
    ))}
  </ToolGroup>
);

const toolRows: Bar[][] = [
  [
    { width: 274, items: "start:开始 v page open save | cut copy paste | undo redo | finder:命令查找器 folder v | styles ." },
    { width: 206, items: "fit v shade v blueCube v bw boxA boxB boxC v square v | clipA clipB ." },
    { width: 145, items: "layers csys v | lightA lightB | play v | ruler angle ." },
  ],
  [
    { width: 384, items: "plane v extrude revolve hole boss pocket | emboss offset pattern unite v trim split rib sheet draft shell | thread blend chamfer scale sphere net ." },
    { width: 170, items: "syncMove v syncPull v syncDelete syncReplace v syncResize v syncDim v syncEdit syncShell ." },
    { width: 129, items: "surfA surfB sweep mesh nSided ribbon book v ." },
  ],
  [
    { width: 147, items: "frame stackA stackB | tag | asmAdd asmMove asmMate | asmSeq ." },
    { width: 123, items: "teapotA teapotB teapotC teapotD teapotC teapotD treeHand ." },
    { width: 62, items: "cylinder pin screw ." },
    { width: 76, items: "checkA checkB checkC checkD ." },
  ],
];

const SelectionBar = styled.div`
  display: flex;
  align-items: center;
  flex: none;
  height: 15px;
  padding: 0 2px;
  background: linear-gradient(#cdcdcd, #d9d9d9);
`;

const FilterBox = styled.span<{ $width: number }>`
  position: relative;
  display: flex;
  width: ${(p) => p.$width}px;
  height: 10px;
  margin-right: 3px;
  border: 1px solid #8b98a8;
  background: #fff;
  &::after {
    content: "";
    position: absolute;
    top: 0;
    right: 0;
    width: 8px;
    height: 8px;
    pointer-events: none;
    background:
      linear-gradient(#111, #111) center 3px / 5px 1px no-repeat,
      linear-gradient(#111, #111) center 4px / 3px 1px no-repeat,
      linear-gradient(#cfe6fb, #6aa7dc);
    box-shadow: inset 0 0 0 1px #5d8fc0;
  }
`;

const FilterSelect = styled.select`
  appearance: none;
  width: 100%;
  padding: 0 8px 0 1px;
  border: 0;
  background: none;
  line-height: 8px;
`;

const Spacer = styled.span`
  flex: 1;
`;

const Prompt = styled.div`
  display: flex;
  align-items: center;
  flex: none;
  height: 12px;
  padding: 0 2px;
  gap: 1px;
  font-size: 7px;
  font-weight: 700;
  background: #dadada;
  border-top: 1px solid #e8e8e8;
  border-bottom: 1px solid #9b9b9b;
`;

const PromptPane = styled.p<{ $basis?: number }>`
  flex: ${(p) => (p.$basis ? `0 0 ${p.$basis}px` : 1)};
  height: 10px;
  margin: 0;
  line-height: 9px;
  border-right: 1px solid #c4c4c4;
`;

const selectionTools = "selGray | selPlus v selBack selLasso selRot selHook | marquee v | snapMix! snapMesh snapEnd! snapMid! snapCtrl snapCross snapArc! snapQuad snapPoint! snapCurve! snapFace | blueCube";

/* ---------- resource bar and navigator ---------- */

const Workspace = styled.main`
  display: flex;
  flex: 1;
  min-height: 0;
`;

const ResourceBar = styled.div`
  display: flex;
  flex-direction: column;
  gap: 1px;
  flex: 0 0 17px;
  padding: 8px 0 0 4px;
  background: #a9a9a9;
`;

const ResourceTab = styled.button<{ $active?: boolean; $apart?: boolean }>`
  display: grid;
  place-items: center;
  height: 21px;
  margin: ${(p) => (p.$apart ? "6px 0 0" : "0")};
  margin-left: ${(p) => (p.$active ? -1 : 0)}px;
  padding: 0;
  border: 1px solid #8a8a8a;
  border-right: ${(p) => (p.$active ? 0 : 1)}px solid #8a8a8a;
  border-radius: 2px 0 0 2px;
  background: ${(p) => (p.$active ? "#ececec" : "#d2d2d2")};
`;

const Navigator = styled.aside`
  display: flex;
  flex-direction: column;
  flex: 0 0 170px;
  padding: 0 5px 2px;
  background: #e9e9e9;
  border-right: 2px solid #a6a6a6;
`;

const NavigatorTitle = styled.h2`
  display: flex;
  align-items: center;
  gap: 5px;
  height: 18px;
  margin: 0;
  padding: 2px 0 0 1px;
  font-size: 7px;
  font-weight: 700;
`;

const TreeTable = styled.table`
  display: flex;
  flex-direction: column;
  flex: 1;
  min-height: 0;
  border: 1px solid #8b8b8b;
  background: #fff;
`;

const TreeHead = styled.thead`
  flex: none;
`;

const TreeBody = styled.tbody`
  flex: 1;
  display: grid;
  grid-auto-rows: 1fr;
  min-height: 0;
`;

const TreeRow = styled.tr`
  display: grid;
  grid-template-columns: 104px 1fr;
  min-height: 0;
  ${TreeBody} &:nth-child(even) {
    background: #f4f4f4;
  }
`;

const HeadCell = styled.th`
  display: flex;
  align-items: center;
  gap: 8px;
  height: 10px;
  padding: 0 3px;
  font-weight: 400;
  border-right: 1px solid #bdbdbd;
  border-bottom: 1px solid #bdbdbd;
  background: linear-gradient(#f4f4f4, #d5d5d5);
`;

const SortMark = styled.span`
  border: 3px solid transparent;
  border-top: 0;
  border-bottom-color: #111;
`;

const Cell = styled.td<{ $level?: number; $faded?: boolean }>`
  display: flex;
  align-items: center;
  gap: 1px;
  min-width: 0;
  min-height: 0;
  overflow: hidden;
  padding: 0 0 0 ${(p) => (p.$level === 2 ? 13 : 1)}px;
  border-right: 1px solid #ebebeb;
  color: ${(p) => (p.$faded ? "#9c9c9c" : "#222")};
  white-space: nowrap;
`;

const Expander = styled.button`
  display: grid;
  place-items: center;
  width: 5px;
  height: 5px;
  margin-right: 2px;
  padding: 0;
  border: 1px solid #b4b4b4;
  background:
    linear-gradient(#555, #555) center / 3px 1px no-repeat,
    #fff;
  &[aria-expanded="false"]::after {
    content: "";
    width: 1px;
    height: 3px;
    background: #555;
  }
`;

const Branch = styled.span<{ $width: number }>`
  width: ${(p) => p.$width}px;
  border-top: 1px dotted #bbb;
`;

const TickBox = styled.input`
  appearance: none;
  position: absolute;
  inset: 0;
  width: 8px;
  height: 8px;
  margin: 0;
  border: 1px solid #4a5c4c;
`;

const TickFrame = styled.span`
  position: relative;
  flex: none;
  width: 8px;
  height: 8px;
  background: #fff;
`;

const Tick = ({ size }: { size: number }) => (
  <Glyph $size={size} viewBox="0 0 16 16" aria-hidden="true">
    {line("M3 8L7 13L13 4", "#1c9a2e", 3)}
  </Glyph>
);

type Node = { label: string; icon: string; level: 1 | 2; open?: boolean; faded?: boolean; ticked?: boolean };

const nodes: Node[] = [
  { label: "历史记录模式", icon: "clock", level: 1 },
  { label: "模型视图", icon: "modelView", level: 1, open: false },
  { label: "摄像机", icon: "camera", level: 1, open: false, ticked: true },
  { label: "用户表达式", icon: "folder", level: 1, open: false },
  { label: "模型历史记录", icon: "folder", level: 1, open: true },
  { label: "基准坐标系 (0)", icon: "csysTree", level: 2, faded: true },
  { label: "拉伸 (2)", icon: "extrude", level: 2 },
  { label: "圆弧 (3)", icon: "arcTree", level: 2 },
];
const blankRows = Array.from({ length: 25 }, (_, i) => i);

const Splitter = styled.div`
  display: flex;
  justify-content: center;
  align-items: center;
  height: 7px;
  flex: none;
  &::after {
    content: "";
    width: 28px;
    height: 3px;
    border: 1px solid #b4b4b4;
    background: #d9d9d9;
  }
`;

const SectionButton = styled.button`
  display: flex;
  align-items: center;
  flex: none;
  height: 12px;
  padding: 0 0 0 3px;
  border: 0;
  border-bottom: 1px solid #b2b2b2;
  border-right: 1px solid #b2b2b2;
  background: linear-gradient(#f6f6f6, #d6d6d6);
  font-weight: 700;
  text-align: left;
  svg {
    margin-left: auto;
    padding: 2px;
    width: 12px;
    height: 11px;
    border-left: 1px solid #b9b9b9;
  }
`;

/* ---------- graphics view ---------- */

const View = styled.section`
  flex: 1;
  min-width: 0;
  background: #fff;
`;

const Scene = styled.svg`
  display: block;
  width: 100%;
  height: 100%;
`;

const Watermark = styled.svg`
  position: absolute;
  right: 50px;
  bottom: 16px;
  width: 184px;
  height: 92px;
  pointer-events: none;
`;

const Model = () => (
  <Scene viewBox="188 107 812 422" aria-label="模型">
    <defs>
      <linearGradient id="bore">
        <stop offset="0" stopColor="#8e8e8e" />
        <stop offset="0.2" stopColor="#848484" />
        <stop offset="0.5" stopColor="#5c5c5c" />
        <stop offset="0.75" stopColor="#626262" />
        <stop offset="1" stopColor="#767676" />
      </linearGradient>
      <clipPath id="rim">
        <ellipse cx="553.5" cy="298.7" rx="46.3" ry="28.5" transform="rotate(3 553.5 298.7)" />
      </clipPath>
    </defs>
    <path d="M420 253.5L525 207L686.5 344L582 390.5Z" fill="#f0f0f0" />
    <path d="M420 253.5L582 390.5L580 421.5L418 285Z" fill="#727272" />
    <path d="M582 390.5L686.5 344L685 375L580 421.5Z" fill="#838383" />
    <g clipPath="url(#rim)">
      <path d="M500 260H610V335H500Z" fill="url(#bore)" />
      <ellipse cx="552" cy="329.8" rx="46.3" ry="28.5" transform="rotate(3 552 329.8)" fill="#fff" />
    </g>
    <path d="M562.5 348C559.5 360 576 376.5 600 376.5Q610 376.5 620 373.5" fill="none" stroke="#10108c" strokeWidth="1.6" />
    <path d="M231 479L240 485L239 497L229 502L220 496L222 484Z" fill="#dcdce2" stroke="#a59cae" strokeWidth="0.8" />
    <path d="M231 479L229 502M222 484L239 497M220 496L240 485" fill="none" stroke="#a59cae" strokeWidth="0.8" />
    <path d="M220 495L239 487M238 484L240 487L242 484" fill="none" stroke="#58a068" strokeWidth="0.9" />
    <path d="M220 495L220.500 481" stroke="#1c36a8" strokeWidth="1.5" />
    <path d="M218.500 483L220.800 477.500L222.500 483Z" fill="#1c36a8" />
    <path d="M220 495L229 502" stroke="#c02a2a" strokeWidth="1.5" />
    <path d="M228 503.500L230 500L234 506Z" fill="#c02a2a" />
    <circle cx="219.500" cy="495.500" r="1.6" fill="#999" />
    <text x="219" y="477" fontSize="6" fill="#3a5ac8">Z</text>
    <text x="233" y="511" fontSize="6" fill="#d06060">X</text>
  </Scene>
);

const Mark = () => (
  <Watermark viewBox="766 455 184 92" aria-label="Baidu 经验">
    <g fill="#fff" stroke="#d2d2d2" strokeWidth="1.6" strokeLinejoin="round" paintOrder="stroke">
      <ellipse cx="835.500" cy="477.800" rx="6.500" ry="8.500" />
      <ellipse cx="847.700" cy="465.500" rx="6.300" ry="9" />
      <ellipse cx="864" cy="466.500" rx="6.500" ry="9" transform="rotate(8 864 466.500)" />
      <ellipse cx="873.700" cy="481.500" rx="7" ry="8.500" transform="rotate(10 873.700 481.500)" />
      <path d="M854 480C844 480 843 489 837 494C830 500 830 513 842 513C848 513 849 512 854 512C860 512 862 513 868 513C879 512 879 500 872 494C865 489 864 480 854 480Z" />
      <g strokeWidth="2.4">
        <text x="767" y="511" fontFamily="Liberation Sans" fontWeight="700" fontSize="40">Bai</text>
        <text x="840" y="507" fontFamily="Liberation Sans" fontWeight="700" fontSize="24" stroke="#c8c8c8">du</text>
        <text x="882" y="509" fontFamily="Noto Sans CJK SC" fontWeight="700" fontSize="30">经验</text>
        <text x="769" y="535" fontFamily="Noto Sans" fontSize="20" stroke="#cecece">jingyan.baidu.com</text>
      </g>
    </g>
  </Watermark>
);

/* ---------- bottom bars ---------- */

const SketchBar = styled.div`
  display: flex;
  flex: none;
  height: 18px;
  padding-left: 184px;
  background: linear-gradient(#e4e4e4, #cbcbcb);
`;

const Taskbar = styled.footer`
  display: flex;
  align-items: center;
  flex: none;
  height: 16px;
  padding-left: 4px;
  color: #fff;
  border-top: 1px solid #8f3a48;
  background:
    radial-gradient(ellipse 24px 8px at 645px 4px, #cf5162, transparent),
    radial-gradient(ellipse 8px 5px at 730px 6px, #cf5162, transparent),
    radial-gradient(ellipse 6px 8px at 772px 8px, #cb4c5e, transparent),
    linear-gradient(90deg, #cf5a62 0, #cb4a60 20%, #c8425f 40%, #cc4a5c 56%, #c2354a 62%, #bf3346 83%, #96303d 88%, #99303e 100%);
`;

const StartOrb = styled.button`
  display: grid;
  place-items: center;
  width: 19px;
  height: 19px;
  margin: -2px 8px -2px 0;
  padding: 0;
  border: 1px solid #2f4a6c;
  border-radius: 50%;
  background: radial-gradient(circle at 50% 30%, #9cc4dc, #2f6292 60%, #1c3a62);
`;

const TaskButton = styled.button<{ $active?: boolean }>`
  display: grid;
  place-items: center;
  width: 22px;
  height: 15px;
  margin-right: 2px;
  padding: 0;
  border: 1px solid ${(p) => (p.$active ? "#f0c4c8" : "#e09aa2")};
  border-radius: 2px;
  background: ${(p) => (p.$active ? "linear-gradient(#f4d4d6, #dc9098)" : "linear-gradient(#dc868e, #c4505e)")};
`;

const AppBadge = styled.span<{ $back: string; $ink: string }>`
  width: 9px;
  height: 9px;
  font-size: 6px;
  font-weight: 700;
  line-height: 9px;
  text-align: center;
  color: ${(p) => p.$ink};
  background: ${(p) => p.$back};
`;

const Tray = styled.div`
  display: flex;
  align-items: center;
  gap: 4px;
  margin-left: auto;
`;

const TrayButton = styled.button`
  display: grid;
  place-items: center;
  min-width: 8px;
  height: 12px;
  padding: 0;
  border: 0;
  background: none;
`;

const HelpBadge = styled.span`
  width: 8px;
  height: 8px;
  border-radius: 50%;
  color: #fff;
  background: #1c2f94;
  font-size: 6px;
  font-weight: 700;
  line-height: 8px;
`;

const Clock = styled.time`
  margin: 0 4px 0 6px;
  font-size: 7px;
`;

const ShowDesktop = styled.button`
  width: 8px;
  height: 15px;
  padding: 0;
  border: 1px solid #7c2430;
  background: linear-gradient(90deg, #b8606a, #8c2c3a);
`;

const menus: [string, string?][] = [
  ["文件", "F"], ["编辑", "E"], ["视图", "V"], ["插入", "S"], ["格式", "R"], ["工具", "T"], ["装配", "A"],
  ["信息", "I"], ["分析", "L"], ["首选项", "P"], ["窗口", "O"], ["GC 工具箱"], ["帮助", "H"], ["甲天下"],
];

const resources = ["navAsm", "navCon", "navPart", "navReuse", "navInfo", "navWeb", "clock", "navHist", "navMat", "navScene", "navRole", "navSys"];

export default function App() {
  return (
    <Window>
      <Global />
      <TitleBar>
        <Icon name="nx" size={9} />
        <Title>NX 8 - 建模 - [point_08.prt （修改的）]</Title>
        <Brand>SIEMENS</Brand>
        <WindowButton $tone="dark" aria-label="最小化"><WindowMark kind="min" /></WindowButton>
        <WindowButton $tone="dark" aria-label="还原"><WindowMark kind="restore" /></WindowButton>
        <WindowButton $tone="close" aria-label="关闭"><WindowMark kind="close" /></WindowButton>
      </TitleBar>
      <MenuBar>
        <Icon name="part" size={10} />
        <Menus>
          {menus.map(([label, key]) => (
            <MenuItem key={label}>
              {label}
              {key && <>(<u>{key}</u>)</>}
            </MenuItem>
          ))}
        </Menus>
        <MenuButtons>
          <WindowButton $tone="light" aria-label="最小化部件"><WindowMark kind="min" /></WindowButton>
          <WindowButton $tone="light" aria-label="还原部件"><WindowMark kind="restore" /></WindowButton>
          <WindowButton $tone="light" aria-label="关闭部件"><WindowMark kind="close" /></WindowButton>
        </MenuButtons>
      </MenuBar>

      <ToolArea>
        {toolRows.map((row, i) => (
          <ToolRow key={i}>
            {row.map((bar) => (
              <Toolbar key={bar.items} {...bar} />
            ))}
          </ToolRow>
        ))}
      </ToolArea>

      <SelectionBar>
        <FilterBox $width={75}>
          <FilterSelect aria-label="类型过滤器"><option>没有选择过滤器</option></FilterSelect>
        </FilterBox>
        <FilterBox $width={79}>
          <FilterSelect aria-label="选择范围"><option>整个装配</option></FilterSelect>
        </FilterBox>
        {selectionTools.split(" ").map((code, i) => {
          if (code === "|") return <Divider key={i} />;
          if (code === "v") return <DropButton key={i} aria-label="展开" />;
          const name = code.replace("!", "");
          return (
            <ToolButton key={i} $small $pressed={code !== name} aria-label={name}>
              <Icon name={name} size={10} />
            </ToolButton>
          );
        })}
        <Spacer />
        <DropButton $low aria-label="更多" />
      </SelectionBar>

      <Prompt>
        <PromptPane $basis={472}>选择对象并使用 MB3，或者双击某一对象</PromptPane>
        <PromptPane />
        <PromptPane $basis={10} />
        <PromptPane $basis={18} />
        <Icon name="tile" size={9} />
        <Icon name="full" size={10} />
      </Prompt>

      <Workspace>
        <ResourceBar>
          {resources.map((name, i) => (
            <ResourceTab key={name} $active={i === 2} $apart={i > 3 && i < 7} aria-label={name}>
              <Icon name={name} size={12} />
            </ResourceTab>
          ))}
        </ResourceBar>
        <Navigator>
          <NavigatorTitle>
            <Icon name="pushpin" size={8} />
            部件导航器
          </NavigatorTitle>
          <TreeTable>
            <TreeHead>
              <TreeRow>
                <HeadCell>名称<SortMark /></HeadCell>
                <HeadCell>附注</HeadCell>
              </TreeRow>
            </TreeHead>
            <TreeBody>
              {nodes.map((node) => (
                <TreeRow key={node.label}>
                  <Cell $level={node.level} $faded={node.faded}>
                    {node.level === 1 &&
                      (node.open === undefined ? <Branch $width={7} /> : <Expander aria-label={node.label} aria-expanded={node.open} />)}
                    {node.level === 2 && (
                      <>
                        <Branch $width={5} />
                        <TickFrame>
                          <Tick size={8} />
                          <TickBox type="checkbox" defaultChecked aria-label={node.label} />
                        </TickFrame>
                      </>
                    )}
                    {node.ticked && <Tick size={8} />}
                    <Icon name={node.icon} size={9} />
                    {node.label}
                  </Cell>
                  <Cell />
                </TreeRow>
              ))}
              {blankRows.map((n) => (
                <TreeRow key={n}>
                  <Cell />
                  <Cell />
                </TreeRow>
              ))}
            </TreeBody>
          </TreeTable>
          <Splitter />
          {["相依性", "细节", "预览"].map((label) => (
            <SectionButton key={label}>
              {label}
              <svg viewBox="0 0 8 8" aria-hidden="true">
                <path d="M1 2L4 6L7 2" fill="none" stroke="#444" strokeWidth="1.5" />
              </svg>
            </SectionButton>
          ))}
        </Navigator>
        <View>
          <Model />
        </View>
      </Workspace>

      <SketchBar>
        <Toolbar
          width={422}
          items="sketch finish :完成草图 profile segment arc circle fillet bevel rect spline plus polygon v | trimA trimB extend | project v | parallel symmetry constraint v | convert mirror bucket ."
        />
      </SketchBar>

      <Taskbar>
        <StartOrb aria-label="开始菜单">
          <svg width="12" height="12" viewBox="0 0 12 12" aria-hidden="true">
            <path d="M1 3Q3 1 5.500 3L5 6Q3 4 0.500 6Z" fill="#ee6a35" />
            <path d="M6.500 3Q9 4.500 11 3L10.500 6Q8 7.500 6 6Z" fill="#8cc63f" />
            <path d="M0.500 7Q3 5 5 7L4.500 10Q2 8.500 0 10Z" fill="#4aa3e0" />
            <path d="M6 7Q8 8.500 10.500 7L10 10Q8 11.500 5.500 10Z" fill="#fbd13c" />
          </svg>
        </StartOrb>
        <TaskButton aria-label="资源管理器"><Icon name="explorer" size={10} /></TaskButton>
        <TaskButton><AppBadge $back="#e8f0fb" $ink="#2a56a8">W</AppBadge></TaskButton>
        <TaskButton><AppBadge $back="#0d2a4a" $ink="#6cc0ea">Ps</AppBadge></TaskButton>
        <TaskButton $active aria-label="NX"><Icon name="nx" size={10} /></TaskButton>
        <TaskButton aria-label="浏览器"><Icon name="safe" size={9} /></TaskButton>
        <Tray>
          <TrayButton aria-label="键盘"><Icon name="ime" size={8} /></TrayButton>
          <TrayButton><HelpBadge>?</HelpBadge></TrayButton>
          {["tray", "up", "safe", "flag", "signal", "volume"].map((name) => (
            <TrayButton key={name} aria-label={name}><Icon name={name} size={8} /></TrayButton>
          ))}
          <Clock>9:08</Clock>
          <ShowDesktop aria-label="显示桌面" />
        </Tray>
      </Taskbar>
      <Mark />
    </Window>
  );
}
